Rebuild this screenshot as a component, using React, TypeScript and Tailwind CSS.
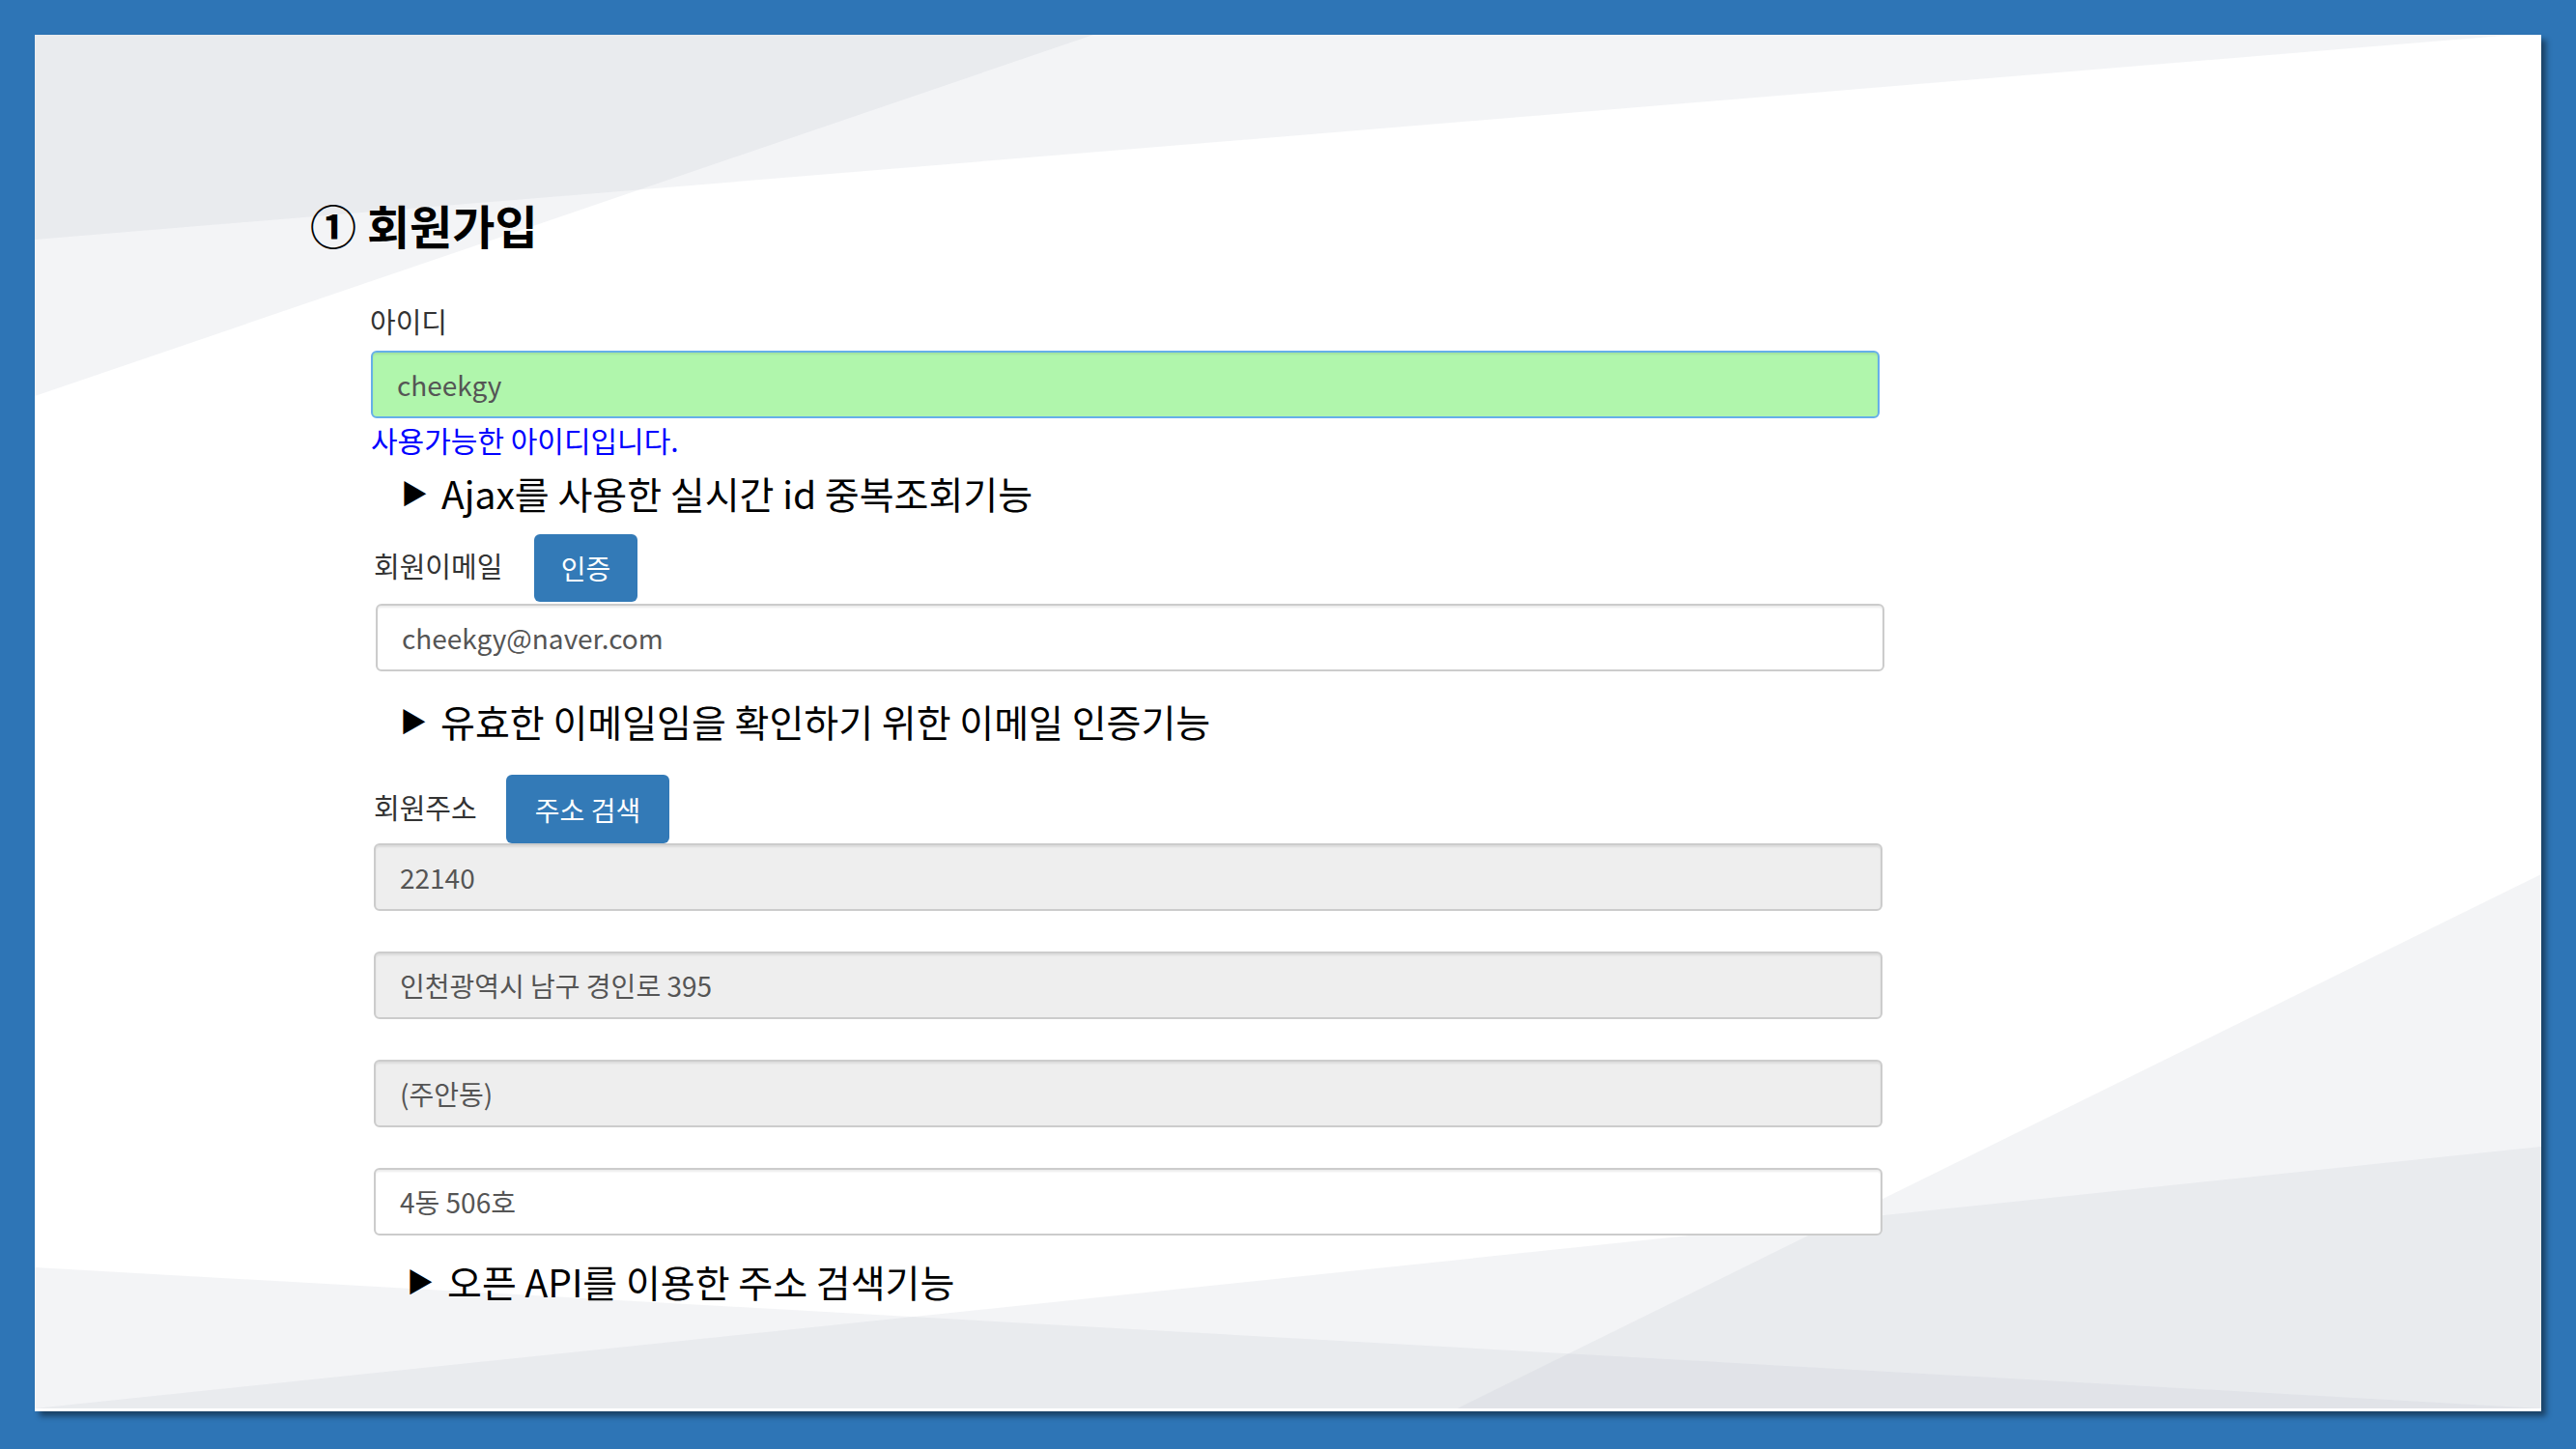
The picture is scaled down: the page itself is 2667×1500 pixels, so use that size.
import React from 'react';

const inputBase =
    "block w-[1562px] h-[70px] rounded-[6px] border-2 px-[25px] text-[28px] text-[#555] outline-none shadow-[inset_0_2px_2px_rgba(0,0,0,0.075)]";

function Bullet({ children, className }: { children: React.ReactNode; className?: string }) {
    return (
        <div className={`flex items-center h-[50px] text-[39px] text-black ${className ?? ''}`}>
            <span className="inline-block w-[42px] text-[28px] leading-none">▶</span>
            <span>{children}</span>
        </div>
    );
}

export default function App() {
    return (
        <div className="w-[2667px] h-[1500px] bg-[#2e75b6] pt-[36px] pl-[36px] font-['Noto_Sans_CJK_KR','Noto_Sans',sans-serif]">
            <div className="relative w-[2595px] h-[1425px] bg-white overflow-hidden shadow-[5px_5px_6px_rgba(0,0,0,0.45)]">
                {/* slide background shapes */}
                <svg className="absolute inset-0" width="2595" height="1425" viewBox="0 0 2595 1425">
                    <g fill="rgb(188,194,205)" fillOpacity="0.18">
                        <polygon points="0,0 1096,0 0,374" />
                        <polygon points="0,0 2568,0 0,212" />
                        <polygon points="0,1276 2595,1422 0,1422" />
                        <polygon points="0,1422 2595,1151 2595,1422" />
                        <polygon points="2595,869 2595,1422 1473,1422" />
                    </g>
                </svg>

                <div className="relative pt-[168px]">
                    {/* title */}
                    <h1 className="pl-[285px] h-[56px] leading-[56px] text-[48px] font-bold text-black">
                        ① 회원가입
                    </h1>

                    {/* 아이디 */}
                    <div className="pl-[347px] mt-[52px] h-[40px] leading-[40px] text-[29px] text-[#333]">아이디</div>
                    <input
                        readOnly
                        value="cheekgy"
                        className={`${inputBase} ml-[348px] mt-[11px] bg-[#b0f6ac] border-[#66afe9] shadow-[0_0_8px_rgba(102,175,233,0.6)]`}
                    />
                    <div className="pl-[348px] mt-[2px] h-[40px] leading-[40px] text-[30px] text-[#0000ff]">
                        사용가능한 아이디입니다.
                    </div>
                    <Bullet className="pl-[379px] mt-[10px]">Ajax를 사용한 실시간 id 중복조회기능</Bullet>

                    {/* 회원이메일 */}
                    <div className="flex items-center pl-[351px] mt-[18px] h-[70px]">
                        <span className="w-[166px] text-[29px] text-[#333] -mt-[4px]">회원이메일</span>
                        <button className="w-[107px] h-[70px] rounded-[6px] bg-[#337ab7] text-white text-[28px]">인증</button>
                    </div>
                    <input
                        readOnly
                        value="cheekgy@naver.com"
                        className={`${inputBase} ml-[353px] mt-[2px] bg-white border-[#ccc]`}
                    />
                    <Bullet className="pl-[378px] mt-[26px]">유효한 이메일임을 확인하기 위한 이메일 인증기능</Bullet>

                    {/* 회원주소 */}
                    <div className="flex items-center pl-[351px] mt-[31px] h-[71px]">
                        <span className="w-[137px] text-[29px] text-[#333] -mt-[4px]">회원주소</span>
                        <button className="w-[169px] h-[71px] rounded-[6px] bg-[#337ab7] text-white text-[28px]">주소 검색</button>
                    </div>
                    <input readOnly value="22140" className={`${inputBase} ml-[351px] bg-[#eee] border-[#ccc]`} />
                    <input readOnly value="인천광역시 남구 경인로 395" className={`${inputBase} ml-[351px] mt-[42px] bg-[#eee] border-[#ccc]`} />
                    <input readOnly value="(주안동)" className={`${inputBase} ml-[351px] mt-[42px] bg-[#eee] border-[#ccc]`} />
                    <input readOnly value="4동 506호" className={`${inputBase} ml-[351px] mt-[42px] bg-white border-[#ccc]`} />
                    <Bullet className="pl-[385px] mt-[22px]">오픈 API를 이용한 주소 검색기능</Bullet>
                </div>
            </div>
        </div>
    );
}
